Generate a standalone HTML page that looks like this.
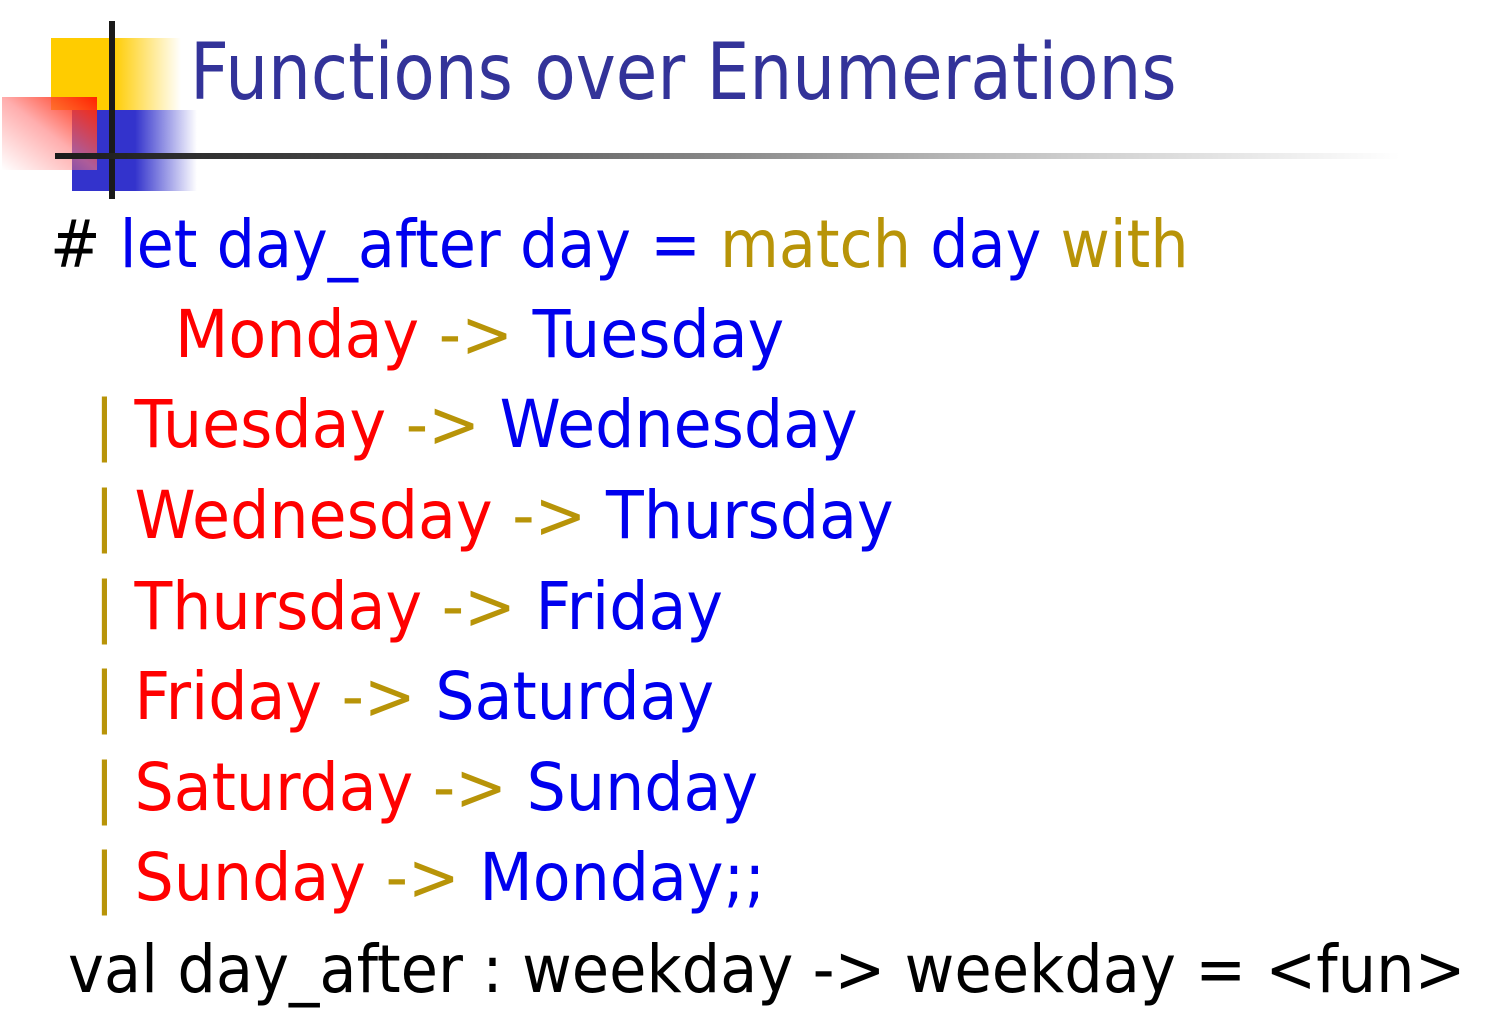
<!DOCTYPE html>
<html><head><meta charset="utf-8"><style>
body{margin:0;width:1492px;height:1034px;background:#fff;position:relative;overflow:hidden;font-family:"DejaVu Sans","Liberation Sans",sans-serif}
.a{position:absolute}
.l{position:absolute;left:0;white-space:pre;font-size:66px;line-height:1;transform-origin:0 0}
.b{color:#0000ee}.r{color:#ff0000}.o{color:#b89408}.k{color:#000}
</style></head><body>
<div class="a" style="left:51px;top:38px;width:130px;height:72px;background:linear-gradient(90deg,#ffcc00 0,#ffcc00 62px,#fff 130px)"></div>
<div class="a" style="left:72px;top:110px;width:125px;height:81px;background:linear-gradient(90deg,#3333cc 0,#3333cc 63px,rgba(255,255,255,0) 125px)"></div>
<div class="a" style="left:2px;top:97px;width:95px;height:73px;background:linear-gradient(to bottom left,#ff2200,rgba(255,120,120,.6) 50%,rgba(255,255,255,0))"></div>
<div class="a" style="left:109px;top:21px;width:6px;height:178px;background:#1a1a1a"></div>
<div class="a" style="left:55px;top:153px;width:1345px;height:6px;background:linear-gradient(90deg,#1a1a1a,#555 30%,#ccc 75%,#fff)"></div>
<div class="l" style="left:190px;top:34px;font-size:78px;color:#333399;transform:scaleX(.867)">Functions over Enumerations</div>
<div class="l" style="left:50px;top:212px;transform:scaleX(.915)"><span class="k">#</span> <span class="b">let day_after day =</span> <span class="o">match</span> <span class="b">day</span> <span class="o">with</span></div>
<div class="l" style="left:175px;top:302px;transform:scaleX(.937)"><span class="r">Monday</span> <span class="o">-&gt;</span> <span class="b">Tuesday</span></div>
<div class="l" style="left:94px;top:392px;transform:scaleX(.937)"><span class="o">|</span> <span class="r">Tuesday</span> <span class="o">-&gt;</span> <span class="b">Wednesday</span></div>
<div class="l" style="left:94px;top:483px;transform:scaleX(.937)"><span class="o">|</span> <span class="r">Wednesday</span> <span class="o">-&gt;</span> <span class="b">Thursday</span></div>
<div class="l" style="left:94px;top:574px;transform:scaleX(.937)"><span class="o">|</span> <span class="r">Thursday</span> <span class="o">-&gt;</span> <span class="b">Friday</span></div>
<div class="l" style="left:94px;top:664px;transform:scaleX(.937)"><span class="o">|</span> <span class="r">Friday</span> <span class="o">-&gt;</span> <span class="b">Saturday</span></div>
<div class="l" style="left:94px;top:755px;transform:scaleX(.937)"><span class="o">|</span> <span class="r">Saturday</span> <span class="o">-&gt;</span> <span class="b">Sunday</span></div>
<div class="l" style="left:94px;top:845px;transform:scaleX(.937)"><span class="o">|</span> <span class="r">Sunday</span> <span class="o">-&gt;</span> <span class="b">Monday;;</span></div>
<div class="l k" style="left:68px;top:937px;transform:scaleX(.92)">val day_after : weekday -&gt; weekday = &lt;fun&gt;</div>
</body></html>
